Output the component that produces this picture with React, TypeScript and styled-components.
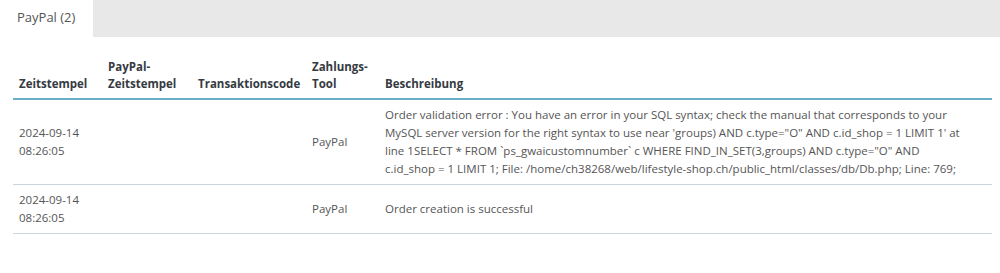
import styled, { createGlobalStyle } from 'styled-components';

const Global = createGlobalStyle`
    body {
        margin: 0;
        background: #ffffff;
        font-family: "Open Sans", "Noto Sans", sans-serif;
        color: #555;
    }
`;

/* Tab strip */
const TabBar = styled.div`
    display: flex;
    height: 37px;
    background: #e8e8e9;
`;

const Tab = styled.div`
    width: 93px;
    background: #ffffff;
    display: flex;
    align-items: center;
    padding: 0 0 3px 17px;
    box-sizing: border-box;
    font-size: 13px;
    color: #555;
`;

/* Content panel */
const Panel = styled.div`
    padding: 21px 8px 0 13px;
`;

const Table = styled.table`
    width: 979px;
    border-collapse: collapse;
    table-layout: fixed;
    font-size: 11.5px;
`;

const Th = styled.th<{ $w: number }>`
    width: ${({ $w }) => $w}px;
    box-sizing: border-box;
    text-align: left;
    vertical-align: bottom;
    font-weight: 700;
    color: #363a41;
    line-height: 17px;
    padding: 0 6px 6px;
    border-bottom: 2px solid #6aaec6;
`;

const Td = styled.td<{ $wide?: boolean }>`
    vertical-align: middle;
    line-height: 18px;
    padding: 6px ${({ $wide }) => ($wide ? '22px' : '6px')} 6px 6px;
    color: #555;
    border-bottom: 1px solid #c9d6de;
`;

const rows = [
    {
        date: '2024-09-14',
        time: '08:26:05',
        tool: 'PayPal',
        text: 'Order validation error : You have an error in your SQL syntax; check the manual that corresponds to your MySQL server version for the right syntax to use near \'groups) AND c.type="O" AND c.id_shop = 1 LIMIT 1\' at line 1SELECT * FROM `ps_gwaicustomnumber` c WHERE FIND_IN_SET(3,groups) AND c.type="O" AND c.id_shop = 1 LIMIT 1; File: /home/ch38268/web/lifestyle-shop.ch/public_html/classes/db/Db.php; Line: 769;',
    },
    {
        date: '2024-09-14',
        time: '08:26:05',
        tool: 'PayPal',
        text: 'Order creation is successful',
    },
];

export default function App() {
    return (
        <>
            <Global />
            <TabBar>
                <Tab>PayPal (2)</Tab>
            </TabBar>
            <Panel>
                <Table>
                    <thead>
                        <tr>
                            <Th $w={89}>Zeitstempel</Th>
                            <Th $w={90}>PayPal-<br />Zeitstempel</Th>
                            <Th $w={114}>Transaktionscode</Th>
                            <Th $w={73}>Zahlungs-<br />Tool</Th>
                            <Th $w={613}>Beschreibung</Th>
                        </tr>
                    </thead>
                    <tbody>
                        {rows.map((r, i) => (
                            <tr key={i}>
                                <Td>{r.date}<br />{r.time}</Td>
                                <Td />
                                <Td />
                                <Td>{r.tool}</Td>
                                <Td $wide>{r.text}</Td>
                            </tr>
                        ))}
                    </tbody>
                </Table>
            </Panel>
        </>
    );
}
